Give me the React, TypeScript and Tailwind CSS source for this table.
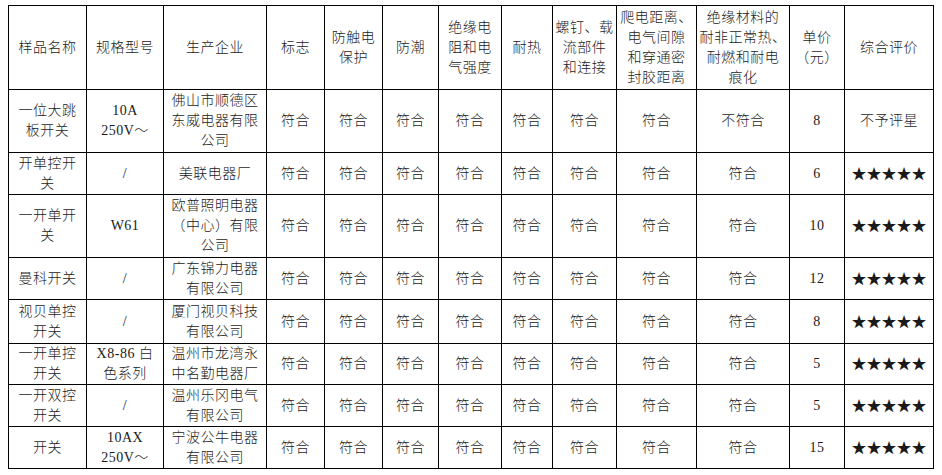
import type { ReactNode } from 'react';

const colWidths = [78, 77, 103, 58, 58, 56, 63, 51, 64, 80, 93, 55, 89];

const headers: ReactNode[] = [
  '样品名称',
  '规格型号',
  '生产企业',
  '标志',
  <>防触电<br />保护</>,
  '防潮',
  <>绝缘电<br />阻和电<br />气强度</>,
  '耐热',
  <>螺钉、载<br />流部件<br />和连接</>,
  <>爬电距离、<br />电气间隙<br />和穿通密<br />封胶距离</>,
  <>绝缘材料的<br />耐非正常热、<br />耐燃和耐电<br />痕化</>,
  <>单价<br />（元）</>,
  '综合评价',
];

interface Row {
  name: ReactNode;
  spec: ReactNode;
  company: ReactNode;
  checks: string[];
  price: string;
  rating: string;
  h: string;
}

const ok = '符合';
const allOk = [ok, ok, ok, ok, ok, ok, ok, ok];
const stars = '★★★★★';

const rows: Row[] = [
  {
    name: <>一位大跳<br />板开关</>,
    spec: <>10A<br />250V～</>,
    company: <>佛山市顺德区<br />东威电器有限<br />公司</>,
    checks: [ok, ok, ok, ok, ok, ok, ok, '不符合'],
    price: '8',
    rating: '不予评星',
    h: 'h-[63px]',
  },
  {
    name: <>开单控开<br />关</>,
    spec: '/',
    company: '美联电器厂',
    checks: allOk,
    price: '6',
    rating: stars,
    h: 'h-[42px]',
  },
  {
    name: <>一开单开<br />关</>,
    spec: 'W61',
    company: <>欧普照明电器<br />（中心）有限<br />公司</>,
    checks: allOk,
    price: '10',
    rating: stars,
    h: 'h-[63px]',
  },
  {
    name: '曼科开关',
    spec: '/',
    company: <>广东锦力电器<br />有限公司</>,
    checks: allOk,
    price: '12',
    rating: stars,
    h: 'h-[42px]',
  },
  {
    name: <>视贝单控<br />开关</>,
    spec: '/',
    company: <>厦门视贝科技<br />有限公司</>,
    checks: allOk,
    price: '8',
    rating: stars,
    h: 'h-[44px]',
  },
  {
    name: <>一开单控<br />开关</>,
    spec: <>X8-86 白<br />色系列</>,
    company: <>温州市龙湾永<br />中名勤电器厂</>,
    checks: allOk,
    price: '5',
    rating: stars,
    h: 'h-[41px]',
  },
  {
    name: <>一开双控<br />开关</>,
    spec: '/',
    company: <>温州乐冈电气<br />有限公司</>,
    checks: allOk,
    price: '5',
    rating: stars,
    h: 'h-[42px]',
  },
  {
    name: '开关',
    spec: <>10AX<br />250V～</>,
    company: <>宁波公牛电器<br />有限公司</>,
    checks: allOk,
    price: '15',
    rating: stars,
    h: 'h-[42px]',
  },
];

const cell = 'border border-black text-center align-middle whitespace-nowrap p-0';

export default function App() {
  return (
    <div
      className="w-[942px] h-[475px] bg-white pl-[8px] pt-[5px] text-[14px] leading-[20px] tracking-[0.5px] font-light text-[#1a1a1a]"
      style={{ fontFamily: "'Liberation Serif', 'Noto Sans CJK SC', serif" }}
    >
      <table className="border-collapse table-fixed w-[926px]">
        <colgroup>
          {colWidths.map((w, i) => (
            <col key={i} style={{ width: w }} />
          ))}
        </colgroup>
        <thead>
          <tr className="h-[84px]">
            {headers.map((h, i) => (
              <th key={i} className={`${cell} font-light`}>
                {h}
              </th>
            ))}
          </tr>
        </thead>
        <tbody>
          {rows.map((r, i) => (
            <tr key={i} className={r.h}>
              <td className={cell}>{r.name}</td>
              <td className={cell}>{r.spec}</td>
              <td className={cell}>{r.company}</td>
              {r.checks.map((c, j) => (
                <td key={j} className={cell}>
                  {c}
                </td>
              ))}
              <td className={cell}>{r.price}</td>
              <td className={`${cell} ${r.rating === stars ? 'text-[15px] tracking-normal' : ''}`}>{r.rating}</td>
            </tr>
          ))}
        </tbody>
      </table>
    </div>
  );
}
